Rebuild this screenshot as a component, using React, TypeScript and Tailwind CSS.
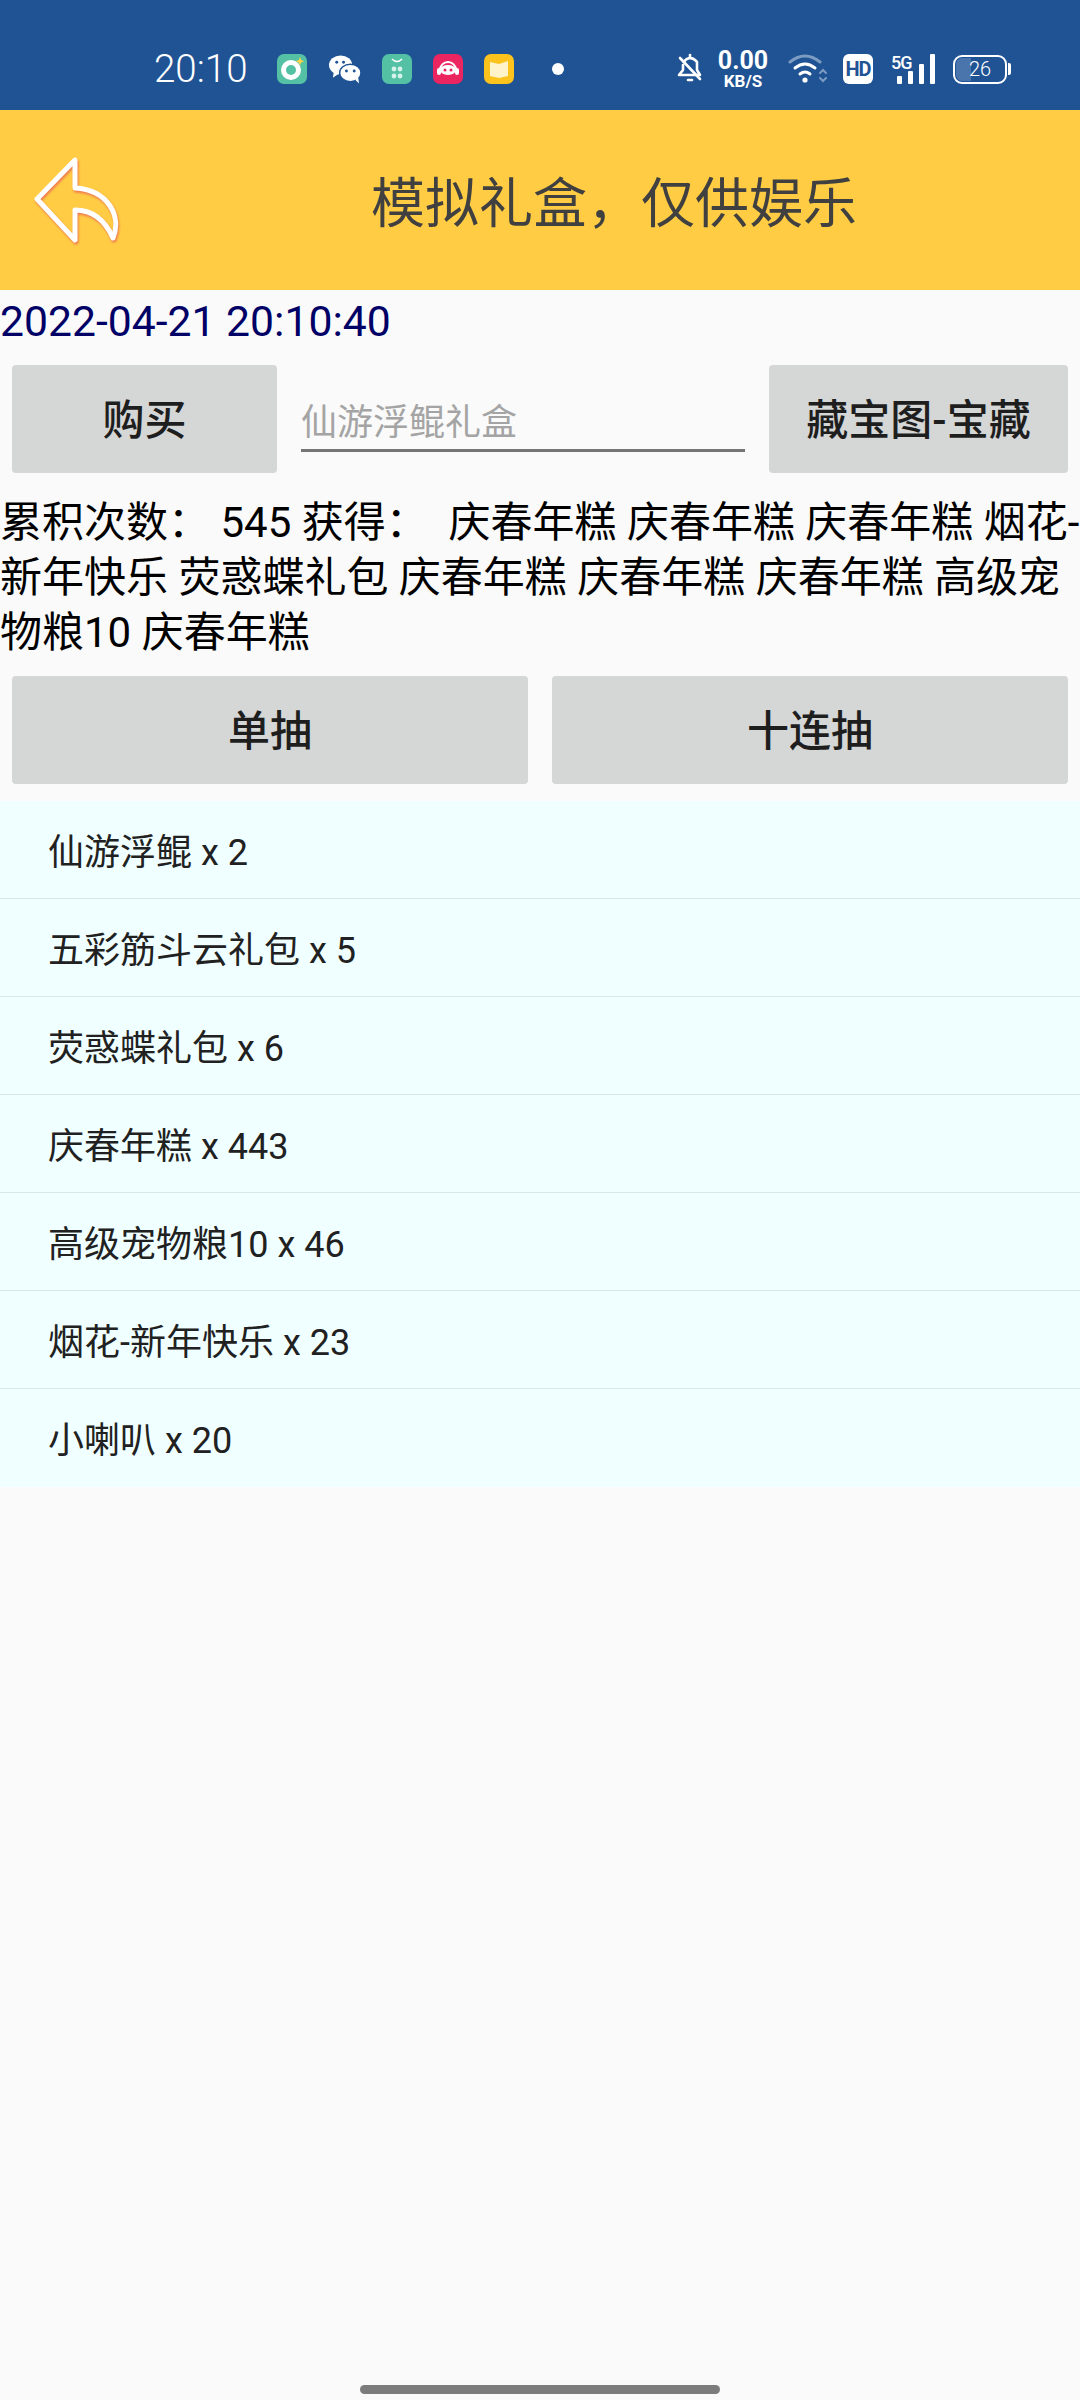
const cjk = "font-['Roboto','Noto_Sans_CJK_SC',sans-serif]";

const rewards = [
  "仙游浮鲲 x 2",
  "五彩筋斗云礼包 x 5",
  "荧惑蝶礼包 x 6",
  "庆春年糕 x 443",
  "高级宠物粮10 x 46",
  "烟花-新年快乐 x 23",
  "小喇叭 x 20",
];

const AppIcon = ({ bg, children }: { bg: string; children: React.ReactNode }) => (
  <div className={`flex h-[30px] w-[30px] items-center justify-center rounded-[7px] ${bg}`}>{children}</div>
);

const StatusBar = () => (
  <div className="flex h-[110px] items-start bg-[#1f5394] pt-[53px] text-white">
    <span className="ml-[154px] flex h-[32px] w-[96px] items-center text-[38.5px] font-light">20:10</span>
    <div className="ml-[27px] flex h-[32px] items-center gap-[21px]">
      <AppIcon bg="bg-[#54c0a4]">
        <svg width="26" height="26" viewBox="0 0 26 26">
          <circle cx="12" cy="14" r="7.5" fill="none" stroke="#fff" strokeWidth="5" />
          <path d="M21 1l1.2 3 3 1.2-3 1.2L21 9.500l-1.200-3-3-1.200 3-1.200z" fill="#ffd54a" />
        </svg>
      </AppIcon>
      <svg width="33" height="30" viewBox="0 0 34 30">
        <ellipse cx="13" cy="11" rx="12" ry="10" fill="#fff" />
        <path d="M6 18l-1 6 6-4z" fill="#fff" />
        <ellipse cx="23" cy="19" rx="11" ry="9" fill="#fff" stroke="#1f5394" strokeWidth="1.5" />
        <path d="M28 26l4 4-1-7z" fill="#fff" />
        <circle cx="9" cy="8" r="1.500" fill="#1f5394" />
        <circle cx="16" cy="8" r="1.500" fill="#1f5394" />
        <circle cx="19" cy="17" r="1.500" fill="#1f5394" />
        <circle cx="27" cy="17" r="1.500" fill="#1f5394" />
      </svg>
      <AppIcon bg="bg-[#54c0a4]">
        <svg width="22" height="24" viewBox="0 0 22 24">
          <path d="M6 2q5 5 10 0" fill="none" stroke="#fff" strokeWidth="1.600" />
          <g fill="#d5f3ea">
            <circle cx="8" cy="12" r="2.400" />
            <circle cx="14" cy="12" r="2.400" />
            <circle cx="8" cy="19" r="2.400" />
            <circle cx="14" cy="19" r="2.400" />
          </g>
        </svg>
      </AppIcon>
      <AppIcon bg="bg-[#ea2560]">
        <svg width="26" height="24" viewBox="0 0 26 24">
          <path d="M5 13a8 8 0 0 1 16 0" fill="none" stroke="#fff" strokeWidth="2" />
          <ellipse cx="13" cy="13" rx="8" ry="5" fill="#fff" />
          <rect x="2" y="11" width="4" height="7" rx="2" fill="#fff" />
          <rect x="20" y="11" width="4" height="7" rx="2" fill="#fff" />
          <circle cx="10" cy="13" r="1.500" fill="#ea2560" />
          <circle cx="16" cy="13" r="1.500" fill="#ea2560" />
        </svg>
      </AppIcon>
      <AppIcon bg="bg-[#fdc31d]">
        <svg width="20" height="20" viewBox="0 0 20 20">
          <path d="M1 3l9 2 9-3v15l-9 2-9-2z" fill="#fff3c9" />
        </svg>
      </AppIcon>
      <div className="ml-[17px] h-[12px] w-[12px] rounded-full bg-white" />
    </div>

    <div className="ml-auto mr-[69px] flex h-[32px] items-center">
      <svg width="26" height="32" viewBox="0 0 26 32" fill="none" stroke="#fff" strokeWidth="2.600" strokeLinecap="round" strokeLinejoin="round">
        <path d="M7 9a7 7 0 0 1 11-2l2 2v8l3 5H2l4-5v-5" />
        <path d="M3 5l20 21" />
        <path d="M11 27h4" />
        <path d="M13 2v2" />
      </svg>
      <div className="ml-[13px] flex w-[54px] flex-col items-center font-['Roboto',sans-serif] font-bold">
        <span className="text-[25px]/[24px]">0.00</span>
        <span className="text-[17px]/[17px]">KB/S</span>
      </div>
      <svg width="40" height="32" viewBox="0 0 40 32" className="ml-[18px]" fill="none" strokeLinecap="round">
        <path d="M2 9q15-12 30 0" stroke="#7d9cc2" strokeWidth="3" />
        <path d="M7 15q10-8 20 0" stroke="#fff" strokeWidth="3" />
        <path d="M12 21q5-4 10 0" stroke="#fff" strokeWidth="3" />
        <circle cx="17" cy="27" r="2.600" fill="#fff" />
        <path d="M32 20l3-3 3 3M32 25l3 3 3-3" stroke="#7d9cc2" strokeWidth="2" />
      </svg>
      <div className="ml-[15px] flex h-[30px] w-[30px] items-center justify-center rounded-[6px] bg-white font-['Roboto',sans-serif] text-[20px] font-bold tracking-[-1px] text-[#1f5394]">
        HD
      </div>
      <div className="relative ml-[19px] h-[30px] w-[43px]">
        <span className="absolute -top-[1px] -left-[1px] font-['Roboto',sans-serif] text-[18px]/[20px] font-medium tracking-[-1px]">5G</span>
        <div className="absolute bottom-0 right-0 flex items-end gap-[6px]">
          <div className="h-[8px] w-[5px] rounded-[1px] bg-white" />
          <div className="h-[13px] w-[5px] rounded-[1px] bg-white" />
          <div className="h-[20px] w-[5px] rounded-[1px] bg-white" />
          <div className="h-[30px] w-[5px] rounded-[1px] bg-white" />
        </div>
      </div>
      <div className="ml-[18px] flex items-center">
        <div className="relative flex h-[29px] w-[54px] items-center rounded-[9px] border-2 border-white p-[1px]">
          <div className="h-full w-[32%] rounded-l-[6px] bg-[#4a74ac]" />
          <span className="absolute inset-0 flex items-center justify-center font-['Roboto',sans-serif] text-[20px] font-light">26</span>
        </div>
        <div className="ml-[1px] h-[12px] w-[3px] rounded-r-[2px] bg-white" />
      </div>
    </div>
  </div>
);

const BackArrow = () => (
  <svg width="92" height="100" viewBox="0 0 92 100" className="drop-shadow-[1px_2px_1px_#ee7a50]">
    <path
      d="M45 10L7 49l38 41V60c17 0 30 10 38 28 9-22-5-48-38-50z"
      fill="none"
      stroke="#fff"
      strokeWidth="5"
      strokeLinejoin="round"
    />
  </svg>
);

const GreyButton = ({ label, className }: { label: string; className: string }) => (
  <button className={`flex h-[108px] items-center justify-center rounded-[4px] bg-[#d5d6d6] pt-[2px] text-[42px] font-medium text-[#1e1e1e] ${className}`}>
    {label}
  </button>
);

export default function App() {
  return (
    <div className={`relative flex h-[2400px] w-[1080px] flex-col bg-[#fafafa] ${cjk}`}>
      <StatusBar />

      <div className="relative flex h-[180px] items-center justify-center bg-[#ffcc44] pt-[8px]">
        <div className="absolute left-[30px] top-[40px]">
          <BackArrow />
        </div>
        <h1 className="ml-[148px] text-[54px] font-normal text-[#404040]">模拟礼盒，仅供娱乐</h1>
      </div>

      <p className="h-[75px] pt-[1px] text-[42.700px]/[60px] text-[#000066]">2022-04-21 20:10:40</p>

      <div className="flex items-start px-[12px]">
        <GreyButton label="购买" className="w-[265px]" />
        <div className="ml-[24px] h-[87px] w-[444px] border-b-[3px] border-[#757575] pt-[37px] text-[36px]/[42px] text-[#a4a4a4]">
          仙游浮鲲礼盒
        </div>
        <GreyButton label="藏宝图-宝藏" className="ml-[24px] w-[299px]" />
      </div>

      <p className="mt-[22px] text-[42px]/[55px] text-black">
        累积次数：&nbsp;545 获得：&nbsp;&nbsp;庆春年糕 庆春年糕 庆春年糕 烟花-新年快乐 荧惑蝶礼包 庆春年糕 庆春年糕 庆春年糕 高级宠物粮10 庆春年糕
      </p>

      <div className="mt-[16px] flex gap-[24px] px-[12px]">
        <GreyButton label="单抽" className="flex-1" />
        <GreyButton label="十连抽" className="flex-1" />
      </div>

      <ul className="mt-[17px] bg-[#f0ffff]">
        {rewards.map((item, i) => (
          <li
            key={item}
            className={`flex h-[98px] items-center pl-[48px] pt-[6px] text-[36px] text-[#212121] ${i < rewards.length - 1 ? "border-b border-[#d7e8e8]" : ""}`}
          >
            {item}
          </li>
        ))}
      </ul>

      <div className="absolute bottom-[6px] left-[360px] h-[9px] w-[360px] rounded-full bg-[#7c7c7c]" />
    </div>
  );
}
